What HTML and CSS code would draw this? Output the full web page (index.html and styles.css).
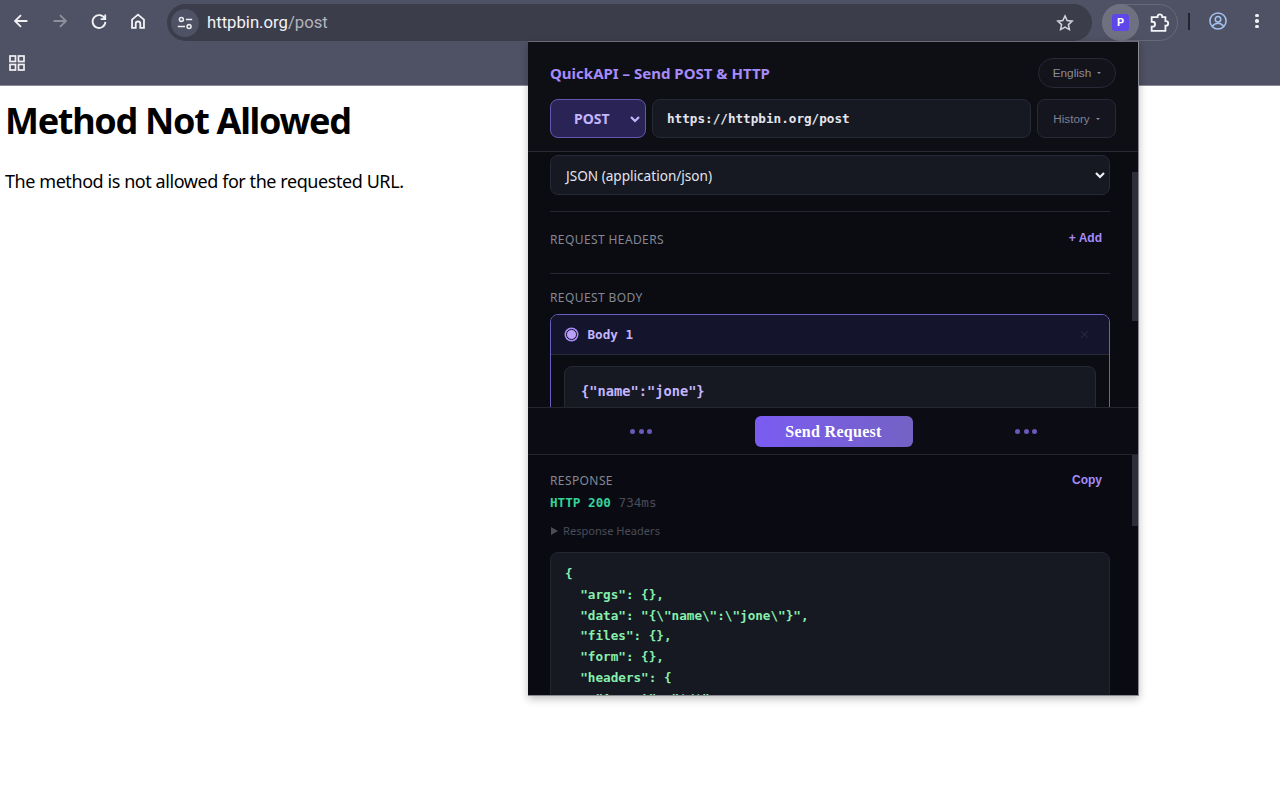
FILE: index.html
```html
<!DOCTYPE html>
<html lang="en">
<head>
  <meta charset="UTF-8">
  <meta name="viewport" content="width=device-width, initial-scale=1.0">
  <title>Method Not Allowed</title>
  <link rel="stylesheet" href="styles.css">
</head>
<body>
<div class="browser-bar">
  <div class="toolbar">
    <div class="nav-icons">
      <svg class="nav-icon" viewBox="0 0 24 24"><path d="M19 12H6M12 5.500 5.500 12l6.500 6.500"/></svg>
      <svg class="nav-icon dim" viewBox="0 0 24 24"><path d="M5 12h13M12 5.500l6.500 6.500-6.500 6.500"/></svg>
      <svg class="nav-icon" viewBox="0 0 24 24"><path d="M18.300 9.500A7 7 0 1 0 19 13M18.800 5v5h-5"/></svg>
      <svg class="nav-icon" viewBox="0 0 24 24"><path d="M5.500 19.500v-9L12 5l6.500 5.500v9h-4v-4.500a2.500 2.500 0 0 0-5 0v4.500z"/></svg>
    </div>
    <div class="omnibox">
      <div class="site-chip">
        <svg viewBox="0 0 20 20"><circle cx="6" cy="6" r="2.200"/><path d="M11 6h7M2 14h8"/><circle cx="14.500" cy="14" r="2.200"/></svg>
      </div>
      <div class="url-text">httpbin.org<span class="url-path">/post</span></div>
      <svg class="star" viewBox="0 0 24 24"><path d="m12 3.500 2.600 5.600 6 .7-4.500 4.100 1.200 6L12 16.900l-5.300 3 1.200-6-4.500-4.100 6-.7z"/></svg>
    </div>
    <div class="ext-group">
      <div class="ext-active"><div class="ext-logo">P</div></div>
      <svg class="puzzle" viewBox="0 0 24 24"><path d="M4 5.500h6.500V5a2.500 2.500 0 0 1 5 0v.5H19v4.500h.5a2.500 2.500 0 0 1 0 5H19v5.500H4v-4.500h1a2.700 2.700 0 0 0 0-5.400H4z"/></svg>
    </div>
    <div class="tool-sep"></div>
    <svg class="profile" viewBox="0 0 24 24"><circle cx="12" cy="12" r="8.800"/><circle cx="12" cy="10" r="3"/><path d="M5.800 18c1.500-2.500 3.600-3.500 6.200-3.500s4.700 1 6.200 3.500"/></svg>
    <div class="kebab"><span></span><span></span><span></span></div>
  </div>
  <div class="bookmarks">
    <svg class="apps" viewBox="0 0 16 16"><rect x="1" y="1" width="5.500" height="5.500"/><rect x="9.500" y="1" width="5.500" height="5.500"/><rect x="1" y="9.500" width="5.500" height="5.500"/><rect x="9.500" y="9.500" width="5.500" height="5.500"/></svg>
  </div>
</div>

<div class="page">
  <h1>Method Not Allowed</h1>
  <p>The method is not allowed for the requested URL.</p>
</div>

<div class="popup">
  <div class="popup-header">
    <div class="title-row">
      <div class="popup-title">QuickAPI – Send POST &amp; HTTP</div>
      <div class="lang-btn">English <span class="caret"></span></div>
    </div>
    <div class="request-row">
      <div class="method-select">POST
        <svg class="chevron" viewBox="0 0 12 12"><path d="m2 4 4 4 4-4"/></svg>
      </div>
      <div class="url-input">https://httpbin.org/post</div>
      <div class="history-btn">History <span class="caret"></span></div>
    </div>
  </div>

  <div class="request-scroll">
    <div class="type-select">JSON (application/json)
      <svg class="chevron" viewBox="0 0 12 12"><path d="m2 4 4 4 4-4"/></svg>
    </div>
    <div class="section headers-section">
      <div class="section-label">REQUEST HEADERS</div>
      <div class="link-btn">+ Add</div>
    </div>
    <div class="section body-section">
      <div class="section-label">REQUEST BODY</div>
      <div class="body-card">
        <div class="body-card-head">
          <span class="radio"></span>
          <span class="body-name">Body 1</span>
          <span class="body-close">×</span>
        </div>
        <div class="body-card-main">
          <div class="body-text">{"name":"jone"}</div>
        </div>
      </div>
    </div>
    <div class="scroll-thumb thumb-top"></div>
  </div>

  <div class="action-bar">
    <div class="dots"><span></span><span></span><span></span></div>
    <div class="send-btn">Send Request</div>
    <div class="dots"><span></span><span></span><span></span></div>
  </div>

  <div class="response">
    <div class="response-head">
      <div class="section-label">RESPONSE</div>
      <div class="link-btn copy">Copy</div>
    </div>
    <div class="status-line"><span class="status-ok">HTTP 200</span> <span class="status-time">734ms</span></div>
    <div class="response-headers"><span class="tri"></span>Response Headers</div>
    <pre class="response-body">{
  "args": {},
  "data": "{\"name\":\"jone\"}",
  "files": {},
  "form": {},
  "headers": {
    "Accept": "*/*",</pre>
    <div class="scroll-thumb thumb-bottom"></div>
  </div>
</div>
</body>
</html>
```
FILE: styles.css
```css
body {
  margin: 0;
  height: 800px;
  overflow: hidden;
  background-color: #ffffff;
  font-family: "Noto Sans", sans-serif;
}

/* browser chrome */
.browser-bar {
  background-color: #4f5164;
  height: 85px;
  border-bottom: 1px solid #8a8b95;
}

.toolbar {
  height: 42px;
  display: flex;
  align-items: center;
}

.nav-icons {
  display: flex;
  gap: 17px;
  padding-left: 10px;
  width: 158px;
  box-sizing: border-box;
}

.nav-icon {
  width: 22px;
  height: 22px;
  fill: none;
  stroke: #f1f1f4;
  stroke-width: 2;
}

.nav-icon.dim {
  stroke: #8f909c;
}

.omnibox {
  margin-left: 9px;
  width: 925px;
  height: 37px;
  margin-top: 3px;
  border-radius: 19px;
  background-color: #3c3d4b;
  display: flex;
  align-items: center;
  padding: 0 17px 0 4px;
  box-sizing: border-box;
}

.site-chip {
  width: 28px;
  height: 28px;
  border-radius: 50%;
  background-color: #4f5164;
  display: flex;
  align-items: center;
  justify-content: center;
}

.site-chip svg {
  width: 18px;
  height: 18px;
  fill: none;
  stroke: #eeeef2;
  stroke-width: 1.700;
}

.url-text {
  margin-left: 8px;
  flex: 1;
  font-size: 16.700px;
  color: #f3f3f6;
  font-family: "Roboto", sans-serif;
}

.url-path {
  color: #b3b4bd;
}

.star {
  width: 20px;
  height: 20px;
  fill: none;
  stroke: #d4d4da;
  stroke-width: 1.800;
}

.ext-group {
  margin-left: 10px;
  margin-top: 3px;
  width: 76px;
  height: 37px;
  border: 1px solid #686a7a;
  border-radius: 19px;
  box-sizing: border-box;
  display: flex;
  align-items: center;
}

.ext-active {
  margin-left: -1px;
  width: 37px;
  height: 37px;
  border-radius: 50%;
  background-color: #6f7180;
  display: flex;
  align-items: center;
  justify-content: center;
}

.ext-logo {
  width: 17px;
  height: 17px;
  border-radius: 3px;
  background-color: #5f46e8;
  color: #ffffff;
  font-size: 11px;
  font-weight: 700;
  text-align: center;
  line-height: 17px;
  font-family: "Inter", sans-serif;
}

.puzzle {
  margin-left: 9px;
  width: 22px;
  height: 22px;
  fill: none;
  stroke: #f4f4f6;
  stroke-width: 2;
}

.tool-sep {
  margin-left: 10px;
  width: 2px;
  height: 17px;
  background-color: #23242e;
}

.profile {
  margin-left: 17px;
  width: 22px;
  height: 22px;
  fill: none;
  stroke: #a3c2ee;
  stroke-width: 1.700;
}

.kebab {
  margin-left: 26px;
  display: flex;
  flex-direction: column;
  gap: 2px;
}

.kebab span {
  width: 3.500px;
  height: 3.500px;
  border-radius: 50%;
  background-color: #f1f1f4;
}

.bookmarks {
  height: 42px;
  display: flex;
  align-items: center;
  padding-left: 9px;
}

.apps {
  width: 16px;
  height: 16px;
  fill: none;
  stroke: #f1f1f4;
  stroke-width: 1.700;
}

/* page behind the popup */
.page {
  padding: 0 5px;
  color: #000000;
}

.page h1 {
  margin: 0;
  padding-top: 14px;
  font-size: 36px;
  line-height: 42px;
  font-weight: 700;
  letter-spacing: -1.300px;
}

.page p {
  margin: 0;
  padding-top: 26px;
  font-size: 18px;
  line-height: 26px;
  letter-spacing: -0.430px;
}

/* popup */
.popup {
  position: absolute;
  left: 528px;
  top: 41px;
  width: 611px;
  height: 655px;
  box-sizing: border-box;
  display: flex;
  flex-direction: column;
  background-color: #0c0d13;
  border-top: 1px solid #6a6b78;
  border-right: 1px solid #8b8c93;
  border-bottom: 1px solid #8b8c93;
  box-shadow: 0 3px 8px rgba(0, 0, 0, 0.25);
  overflow: hidden;
  font-family: "Liberation Sans", sans-serif;
}

.popup-header {
  height: 110px;
  box-sizing: border-box;
  padding: 16px 22px 0;
  border-bottom: 1px solid #272a33;
  background-color: #0e0f15;
}

.title-row {
  display: flex;
  justify-content: space-between;
  align-items: center;
  height: 30px;
}

.popup-title {
  font-family: "Noto Sans", sans-serif;
  font-size: 15px;
  font-weight: 700;
  color: #a78bfa;
}

.lang-btn {
  width: 78px;
  height: 30px;
  box-sizing: border-box;
  border: 1px solid #262936;
  border-radius: 15px;
  display: flex;
  align-items: center;
  justify-content: center;
  gap: 6px;
  font-size: 11.800px;
  color: #8b8d9c;
  background-color: #12131b;
}

.caret {
  width: 0;
  height: 0;
  border-left: 2.500px solid transparent;
  border-right: 2.500px solid transparent;
  border-top: 2.500px solid #8b8d9c;
}

.request-row {
  margin-top: 11px;
  display: flex;
  gap: 6px;
  height: 39px;
}

.method-select {
  width: 96px;
  box-sizing: border-box;
  background-color: #2a2456;
  border: 1px solid #6258b0;
  border-radius: 8px;
  color: #c4b5fd;
  font-family: "Noto Sans", sans-serif;
  font-size: 14px;
  font-weight: 700;
  display: flex;
  align-items: center;
  justify-content: space-between;
  padding: 0 4px 0 23px;
}

.chevron {
  width: 12px;
  height: 12px;
  fill: none;
  stroke: #f0f0f5;
  stroke-width: 2.200;
}

.method-select .chevron {
  stroke: #c4b5fd;
}

.url-input {
  width: 379px;
  box-sizing: border-box;
  background-color: #161822;
  border: 1px solid #262936;
  border-radius: 8px;
  padding-left: 14px;
  display: flex;
  align-items: center;
  font-family: "DejaVu Sans Mono", monospace;
  font-size: 12.650px;
  font-weight: 700;
  color: #e4e5ec;
}

.history-btn {
  flex: 1;
  background-color: #14151e;
  border: 1px solid #262936;
  border-radius: 8px;
  display: flex;
  align-items: center;
  justify-content: center;
  gap: 6px;
  font-size: 11.700px;
  color: #7f8191;
}

.request-scroll {
  position: relative;
  height: 256px;
  box-sizing: border-box;
  padding: 3px 28px 0 22px;
  overflow: hidden;
  border-bottom: 1px solid #23252f;
  background-color: #0b0c12;
}

.type-select {
  height: 40px;
  box-sizing: border-box;
  background-color: #161822;
  border: 1px solid #262936;
  border-radius: 8px;
  padding: 0 3px 0 15px;
  display: flex;
  align-items: center;
  justify-content: space-between;
  font-family: "Noto Sans", sans-serif;
  font-size: 13.600px;
  color: #e4e5ec;
}

.section-label {
  font-family: "Noto Sans", sans-serif;
  font-size: 12px;
  color: #858794;
  letter-spacing: 0.400px;
}

.section {
  border-top: 1px solid #262833;
}

.headers-section {
  margin-top: 16px;
  height: 62px;
  box-sizing: border-box;
  padding: 0 8px 6px 0;
  display: flex;
  align-items: center;
  justify-content: space-between;
}

.headers-section .link-btn {
  margin-top: -3px;
}

.link-btn {
  font-size: 12px;
  font-weight: 700;
  color: #a78bfa;
}

.body-section {
  padding-top: 15px;
}

.body-card {
  margin-top: 8px;
  border: 1px solid #6a5fc0;
  border-radius: 8px;
  background-color: #0c0d13;
}

.body-card-head {
  height: 39px;
  background-color: #14142c;
  border-bottom: 1px solid #272936;
  border-radius: 7px 7px 0 0;
  display: flex;
  align-items: center;
  padding: 0 20px 0 13px;
}

.radio {
  width: 9px;
  height: 9px;
  border-radius: 50%;
  border: 1px solid #0f1020;
  background-color: #b9a0fb;
  box-shadow: 0 0 0 1.500px #a78bfa;
  margin-left: 1.500px;
}

.body-name {
  margin-left: 11px;
  flex: 1;
  font-family: "DejaVu Sans Mono", monospace;
  font-size: 12.650px;
  font-weight: 700;
  color: #c4b5fd;
}

.body-close {
  color: #25263a;
  font-size: 16px;
}

.body-card-main {
  padding: 11px 13px 0;
}

.body-text {
  height: 60px;
  box-sizing: border-box;
  padding: 16px 16px;
  background-color: #161822;
  border: 1px solid #262936;
  border-radius: 8px;
  font-family: "DejaVu Sans Mono", monospace;
  font-size: 13.700px;
  font-weight: 700;
  color: #c4b5fd;
}

.action-bar {
  height: 47px;
  box-sizing: border-box;
  border-bottom: 1px solid #23252f;
  background-color: #0c0d14;
  display: flex;
  align-items: center;
  justify-content: space-between;
  padding: 1px 101px 0 102px;
}

.dots {
  display: flex;
  gap: 3.500px;
}

.dots span {
  width: 5px;
  height: 5px;
  border-radius: 50%;
  background-color: #6b58b8;
}

.send-btn {
  width: 158px;
  height: 31px;
  border-radius: 6px;
  background: linear-gradient(90deg, #7a5cf2, #7462c4);
  color: #ffffff;
  font-family: "Liberation Serif", serif;
  font-size: 16px;
  font-weight: 700;
  letter-spacing: 0.300px;
  display: flex;
  align-items: center;
  justify-content: center;
}

.response {
  position: relative;
  flex: 1;
  min-height: 0;
  padding: 16px 28px 0 22px;
  overflow: hidden;
  background-color: #0a0b12;
}

.response-head {
  display: flex;
  justify-content: space-between;
  align-items: center;
  height: 18px;
  padding-right: 8px;
}

.status-line {
  margin-top: 6px;
  height: 16px;
  line-height: 16px;
  font-family: "DejaVu Sans Mono", monospace;
  font-size: 12.650px;
}

.status-ok {
  color: #34d399;
  font-weight: 700;
}

.status-time {
  color: #4a4c58;
}

.response-headers {
  margin-top: 12px;
  font-family: "Noto Sans", sans-serif;
  font-size: 11.100px;
  line-height: 16px;
  color: #4a4c58;
  display: flex;
  align-items: center;
}

.tri {
  width: 0;
  height: 0;
  border-top: 4px solid transparent;
  border-bottom: 4px solid transparent;
  border-left: 7px solid #4a4c58;
  margin-left: 1px;
  margin-right: 5px;
}

.response-body {
  margin: 13px 0 0;
  height: 300px;
  box-sizing: border-box;
  padding: 11px 14px;
  background-color: #161822;
  border: 1px solid #232531;
  border-radius: 8px;
  font-family: "DejaVu Sans Mono", monospace;
  font-size: 12.650px;
  font-weight: 700;
  line-height: 20.800px;
  color: #86efac;
}

.scroll-thumb {
  position: absolute;
  right: 0;
  width: 6px;
  background-color: #2c2e3a;
}

.thumb-top {
  top: 20px;
  height: 149px;
}

.thumb-bottom {
  top: 0;
  height: 71px;
}
```
